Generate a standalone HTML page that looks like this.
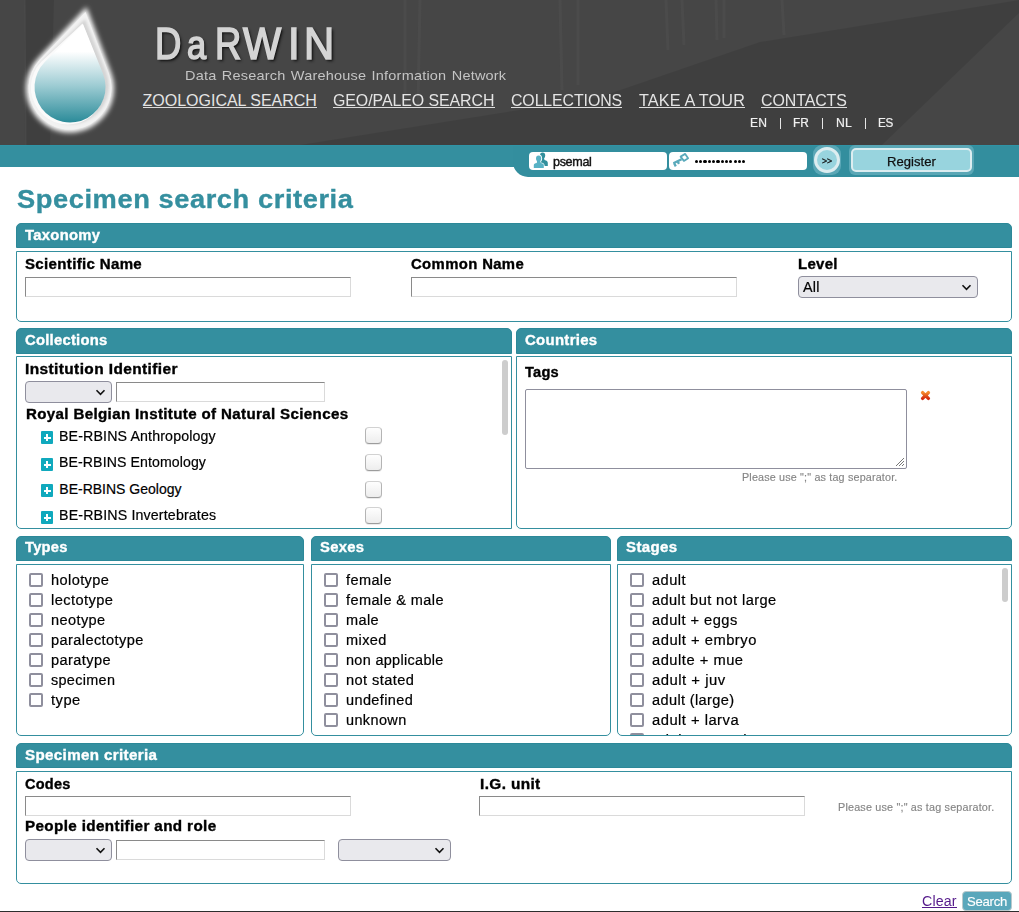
<!DOCTYPE html>
<html><head><meta charset="utf-8"><title>DaRWIN</title><style>
*{box-sizing:border-box;margin:0;padding:0}
html,body{width:1019px;height:912px;overflow:hidden;background:#fff}
body{position:relative;font-family:"Liberation Sans",sans-serif}
.t{position:absolute;white-space:nowrap}
.ab{position:absolute}
.hd{position:absolute;background:#348f9f;border:1px solid #2c8898;border-radius:5px 5px 0 0;height:25px}
.bd{position:absolute;border:1px solid #348f9f;background:#fff}
.inp{position:absolute;background:#fff;border-style:solid;border-width:1px;border-color:#8a8a8a #dadada #dadada #8a8a8a}
.sel{position:absolute;background:#e9e9ed;border:1px solid #8f8f9d;border-radius:4px}
.cb{position:absolute;width:14px;height:14px;border:2px solid #8f8f9d;border-radius:2px;background:#fff}
.ccb{position:absolute;width:17px;height:17px;border:1px solid;border-color:#d2d2d2 #b4b4b4 #9c9c9c #b4b4b4;border-radius:4px;background:linear-gradient(#fefefe,#ededed);box-shadow:0 1px 0 rgba(0,0,0,.08)}
.pl{position:absolute;width:12px;height:13px;background:#10a9bd;border-radius:1px}
.pl:before{content:"";position:absolute;left:5.2px;top:3.3px;width:1.8px;height:7px;background:#fff}
.pl:after{content:"";position:absolute;left:2.5px;top:6.2px;width:7.3px;height:1.8px;background:#fff}
.sb{position:absolute;width:6px;background:#cdcdcd;border-radius:3px}
</style></head><body>
<div class="ab" style="position:absolute;left:0px;top:0px;width:1019px;height:145px;background:#464646;overflow:hidden;"></div>
<svg class="ab" style="left:0;top:0" width="1019" height="145" viewBox="0 0 1019 145"><defs><filter id="bl" x="-20%" y="-20%" width="140%" height="140%"><feGaussianBlur stdDeviation="2.8"/></filter><filter id="bl2" x="-20%" y="-20%" width="140%" height="140%"><feGaussianBlur stdDeviation="1.5"/></filter><linearGradient id="dg" x1="0" y1="0" x2="0" y2="1"><stop offset="0" stop-color="#fff"/><stop offset="0.28" stop-color="#fff"/><stop offset="0.62" stop-color="#9fcdd4"/><stop offset="1" stop-color="#2b8b99"/></linearGradient></defs><path d="M300 145 L600 97 L760 42 L1019 0 L1019 13 L882 145 Z" fill="#000" opacity="0.09"/><path d="M24 0 L54 0 L50 145 L25 145 Z" fill="#000" opacity="0.09"/><path d="M24 0 L25.5 0 L26.5 145 L25 145 Z" fill="#fff" opacity="0.05"/><g fill="none" stroke="#555" stroke-width="3" opacity="0.35"><path d="M405 0 L405 110 M420 0 L418 105 M560 0 L562 90 M578 0 L578 85 M666 0 L668 50 M682 0 L684 45 M716 0 L717 40 M724 0 L724 38 M782 0 L784 35"/></g><path d="M86.5 7.0 L111.2 73.1 A44 44 0 1 1 38.0 58.3 Z" fill="#ffffff" filter="url(#bl)"/><path d="M85.5 12.0 L108.8 73.2 A41.5 41.5 0 1 1 40.1 59.2 Z" fill="#f2f2f2"/><path d="M84.0 20.0 L105.3 72.8 A38 38 0 1 1 43.4 59.9 Z" fill="#d4d4d4" filter="url(#bl2)" transform="translate(1,-1)"/><path d="M84.0 22.0 L104.0 73.0 A37 37 0 1 1 43.0 60.0 Z" fill="#fafafa" transform="translate(-1.5,1.5)"/><path d="M83.0 24.0 L103.0 73.8 A35.5 35.5 0 1 1 45.0 61.8 Z" fill="url(#dg)"/></svg>
<div class="t" style="left:154.84px;top:21.53px;font-size:44.5px;line-height:44.5px;color:#d4d4d4;transform:scaleX(0.8200);transform-origin:0 0;-webkit-text-stroke:1.6px #d4d4d4;text-shadow:2px 2px 3px #101010,1px 1px 1px #1a1a1a;">D</div>
<div class="t" style="left:186.91px;top:25.34px;font-size:40px;line-height:40px;color:#d4d4d4;transform:scaleX(0.8600);transform-origin:0 0;-webkit-text-stroke:1.6px #d4d4d4;text-shadow:2px 2px 3px #101010,1px 1px 1px #1a1a1a;">a</div>
<div class="t" style="left:214.84px;top:21.53px;font-size:44.5px;line-height:44.5px;color:#d4d4d4;transform:scaleX(0.8200);transform-origin:0 0;-webkit-text-stroke:1.6px #d4d4d4;text-shadow:2px 2px 3px #101010,1px 1px 1px #1a1a1a;">R</div>
<div class="t" style="left:243.22px;top:21.53px;font-size:44.5px;line-height:44.5px;color:#d4d4d4;transform:scaleX(0.9100);transform-origin:0 0;-webkit-text-stroke:1.6px #d4d4d4;text-shadow:2px 2px 3px #101010,1px 1px 1px #1a1a1a;">W</div>
<div class="t" style="left:288.36px;top:21.53px;font-size:44.5px;line-height:44.5px;color:#d4d4d4;transform:scaleX(0.9500);transform-origin:0 0;-webkit-text-stroke:1.6px #d4d4d4;text-shadow:2px 2px 3px #101010,1px 1px 1px #1a1a1a;">I</div>
<div class="t" style="left:303.71px;top:21.53px;font-size:44.5px;line-height:44.5px;color:#d4d4d4;transform:scaleX(0.9400);transform-origin:0 0;-webkit-text-stroke:1.6px #d4d4d4;text-shadow:2px 2px 3px #101010,1px 1px 1px #1a1a1a;">N</div>
<div class="t" style="left:185.00px;top:68.57px;font-size:13.5px;line-height:13.5px;color:#c4c4c4;letter-spacing:0.196px;transform:scaleX(1.0736);transform-origin:0 0;word-spacing:1px;">Data Research Warehouse Information Network</div>
<div class="t" style="left:142.60px;top:93.16px;font-size:16px;line-height:16px;color:#e4e4e4;letter-spacing:-0.016px;">ZOOLOGICAL SEARCH</div>
<div class="ab" style="position:absolute;left:143px;top:107px;width:174px;height:1px;background:#dcdcdc;"></div>
<div class="t" style="left:333.30px;top:93.16px;font-size:16px;line-height:16px;color:#e4e4e4;letter-spacing:-0.072px;transform:scaleX(0.9953);transform-origin:0 0;">GEO/PALEO SEARCH</div>
<div class="ab" style="position:absolute;left:333px;top:107px;width:162px;height:1px;background:#dcdcdc;"></div>
<div class="t" style="left:511.40px;top:93.16px;font-size:16px;line-height:16px;color:#e4e4e4;letter-spacing:-0.105px;transform:scaleX(0.9932);transform-origin:0 0;">COLLECTIONS</div>
<div class="ab" style="position:absolute;left:511px;top:107px;width:111px;height:1px;background:#dcdcdc;"></div>
<div class="t" style="left:639.00px;top:93.16px;font-size:16px;line-height:16px;color:#e4e4e4;letter-spacing:0.154px;transform:scaleX(1.0111);transform-origin:0 0;">TAKE A TOUR</div>
<div class="ab" style="position:absolute;left:639px;top:107px;width:106px;height:1px;background:#dcdcdc;"></div>
<div class="t" style="left:761.20px;top:93.16px;font-size:16px;line-height:16px;color:#e4e4e4;letter-spacing:-0.076px;transform:scaleX(0.9953);transform-origin:0 0;">CONTACTS</div>
<div class="ab" style="position:absolute;left:761px;top:107px;width:86px;height:1px;background:#dcdcdc;"></div>
<div class="t" style="left:749.70px;top:116.64px;font-size:12px;line-height:12px;color:#f0f0f0;letter-spacing:0.098px;transform:scaleX(1.0079);transform-origin:0 0;-webkit-text-stroke:0.2px #f0f0f0;">EN</div>
<div class="t" style="left:793.40px;top:116.64px;font-size:12px;line-height:12px;color:#f0f0f0;letter-spacing:-0.120px;transform:scaleX(0.9901);transform-origin:0 0;-webkit-text-stroke:0.2px #f0f0f0;">FR</div>
<div class="t" style="left:835.80px;top:116.64px;font-size:12px;line-height:12px;color:#f0f0f0;letter-spacing:0.195px;transform:scaleX(1.0172);transform-origin:0 0;-webkit-text-stroke:0.2px #f0f0f0;">NL</div>
<div class="t" style="left:878.00px;top:116.64px;font-size:12px;line-height:12px;color:#f0f0f0;letter-spacing:-0.310px;transform:scaleX(0.9748);transform-origin:0 0;-webkit-text-stroke:0.2px #f0f0f0;">ES</div>
<div class="ab" style="left:779.6px;top:117.5px;width:1.3px;height:11.8px;background:#e6e6e6"></div>
<div class="ab" style="left:822px;top:117.5px;width:1.3px;height:11.8px;background:#e6e6e6"></div>
<div class="ab" style="left:864.8px;top:117.5px;width:1.3px;height:11.8px;background:#e6e6e6"></div>
<div class="ab" style="position:absolute;left:0px;top:145px;width:1019px;height:22px;background:#348f9f;"></div>
<div class="ab" style="position:absolute;left:513px;top:145px;width:506px;height:32px;background:#338e9e;border-bottom-left-radius:15px;"></div>
<div class="ab" style="position:absolute;left:0px;top:145px;width:1019px;height:1px;background:#2f94a6;"></div>
<div class="ab" style="position:absolute;left:529px;top:152px;width:138px;height:18px;background:#fff;border-radius:4px;"></div>
<div class="ab" style="position:absolute;left:669px;top:152px;width:138px;height:18px;background:#fff;border-radius:4px;"></div>
<svg class="ab" style="left:528px;top:150px" width="22" height="20" viewBox="0 0 22 20"><ellipse cx="14.6" cy="5.6" rx="2.6" ry="3.1" fill="#318f9c"/><path d="M13.2 8 L16 8 L16.5 10 Q19.8 10.5 19.8 13 L19.8 16 L12 16 L12 10 Z" fill="#318f9c"/><g fill="#fff"><ellipse cx="10.6" cy="8.4" rx="3.5" ry="3.9"/><path d="M5 18.5 L5 15.3 Q5 12.2 10.6 12.2 Q16.5 12.2 16.5 15.3 L16.5 18.5 Z"/></g><g fill="#57b2c5"><ellipse cx="10.6" cy="8.6" rx="2.6" ry="3.1"/><path d="M9 11 L12.2 11 L12.5 13 Q15.8 13.2 15.8 15.3 L15.8 18 L5.8 18 L5.8 15.3 Q5.8 13.2 8.8 13 Z"/></g></svg>
<div class="t" style="left:553.30px;top:154.80px;font-size:13px;line-height:13px;color:#111;letter-spacing:-0.352px;transform:scaleX(0.9675);transform-origin:0 0;-webkit-text-stroke:0.4px #111;">psemal</div>
<svg class="ab" style="left:668px;top:150px" width="24" height="20" viewBox="0 0 24 20"><g fill="none" stroke="#5aaabb" stroke-width="1.8" stroke-linejoin="round"><path d="M12.6 6.6 L17.2 3.9 L20.1 8.3 L15.9 10.9 Z"/><path d="M13.6 9.2 L5.4 13.3 M6 13 L7.8 16.4 M9.6 11.4 L11 13.9" stroke-width="2.3"/></g></svg>
<div class="ab" style="left:694.80px;top:159.5px;width:3.3px;height:3.3px;border-radius:50%;background:#000"></div><div class="ab" style="left:699.10px;top:159.5px;width:3.3px;height:3.3px;border-radius:50%;background:#000"></div><div class="ab" style="left:703.40px;top:159.5px;width:3.3px;height:3.3px;border-radius:50%;background:#000"></div><div class="ab" style="left:707.70px;top:159.5px;width:3.3px;height:3.3px;border-radius:50%;background:#000"></div><div class="ab" style="left:712.00px;top:159.5px;width:3.3px;height:3.3px;border-radius:50%;background:#000"></div><div class="ab" style="left:716.30px;top:159.5px;width:3.3px;height:3.3px;border-radius:50%;background:#000"></div><div class="ab" style="left:720.60px;top:159.5px;width:3.3px;height:3.3px;border-radius:50%;background:#000"></div><div class="ab" style="left:724.90px;top:159.5px;width:3.3px;height:3.3px;border-radius:50%;background:#000"></div><div class="ab" style="left:729.20px;top:159.5px;width:3.3px;height:3.3px;border-radius:50%;background:#000"></div><div class="ab" style="left:733.50px;top:159.5px;width:3.3px;height:3.3px;border-radius:50%;background:#000"></div><div class="ab" style="left:737.80px;top:159.5px;width:3.3px;height:3.3px;border-radius:50%;background:#000"></div><div class="ab" style="left:742.10px;top:159.5px;width:3.3px;height:3.3px;border-radius:50%;background:#000"></div>
<div class="ab" style="position:absolute;left:813px;top:145px;width:28px;height:30px;background:#5aa7b6;border-radius:9px;"></div>
<div class="ab" style="position:absolute;left:814px;top:147px;width:26px;height:26px;background:#98d4de;border:3px solid #dcedf0;border-radius:50%;"></div>
<div class="t" style="left:822.00px;top:157.38px;font-size:9px;line-height:9px;color:#111;letter-spacing:-0.157px;transform:scaleX(0.9805);transform-origin:0 0;-webkit-text-stroke:0.3px #111;">&gt;&gt;</div>
<div class="ab" style="position:absolute;left:849px;top:145px;width:125px;height:30px;background:#5aa7b6;border-radius:6px;"></div>
<div class="ab" style="position:absolute;left:851px;top:148px;width:121px;height:24px;background:#98d4de;border:2px solid #dcedf0;border-radius:5px;"></div>
<div class="t" style="left:886.80px;top:155.20px;font-size:13px;line-height:13px;color:#111;letter-spacing:0.044px;transform:scaleX(1.0049);transform-origin:0 0;-webkit-text-stroke:0.25px #111;">Register</div>
<div class="t" style="left:17.00px;top:186.71px;font-size:25.5px;line-height:25.5px;font-weight:bold;-webkit-text-stroke:0.35px #358f9f;color:#358f9f;letter-spacing:0.539px;transform:scaleX(1.0687);transform-origin:0 0;">Specimen search criteria</div>
<div class="hd" style="left:16px;top:223px;width:996px;height:25px"></div>
<div class="t" style="left:24.60px;top:228.15px;font-size:14px;line-height:14px;font-weight:bold;-webkit-text-stroke:0.35px #fff;color:#fff;letter-spacing:0.302px;transform:scaleX(1.0555);transform-origin:0 0;">Taxonomy</div>
<div class="bd" style="left:16px;top:251px;width:996px;height:71px;border-radius:0 0 5px 5px;"></div>
<div class="t" style="left:25.00px;top:257.15px;font-size:14px;line-height:14px;font-weight:bold;-webkit-text-stroke:0.35px #000;color:#000;letter-spacing:0.318px;transform:scaleX(1.0736);transform-origin:0 0;">Scientific Name</div>
<div class="inp" style="left:25px;top:277px;width:326px;height:20px"></div>
<div class="t" style="left:411.00px;top:257.15px;font-size:14px;line-height:14px;font-weight:bold;-webkit-text-stroke:0.35px #000;color:#000;letter-spacing:0.357px;transform:scaleX(1.0608);transform-origin:0 0;">Common Name</div>
<div class="inp" style="left:411px;top:277px;width:326px;height:20px"></div>
<div class="t" style="left:798.00px;top:257.15px;font-size:14px;line-height:14px;font-weight:bold;-webkit-text-stroke:0.35px #000;color:#000;letter-spacing:0.303px;transform:scaleX(1.0677);transform-origin:0 0;">Level</div>
<div class="sel" style="left:798px;top:276px;width:180px;height:22px"><svg class="ab" style="right:5px;top:6.5px" width="11" height="7" viewBox="0 0 11 7"><path d="M1.5 1.3 L5.5 5.3 L9.5 1.3" fill="none" stroke="#111" stroke-width="1.6"/></svg></div>
<div class="t" style="left:803.00px;top:280.15px;font-size:14px;line-height:14px;color:#000;letter-spacing:0.188px;transform:scaleX(1.0248);transform-origin:0 0;-webkit-text-stroke:0.2px #000;">All</div>
<div class="hd" style="left:16px;top:328px;width:496px;height:26px"></div>
<div class="t" style="left:24.60px;top:332.85px;font-size:14px;line-height:14px;font-weight:bold;-webkit-text-stroke:0.35px #fff;color:#fff;letter-spacing:0.244px;transform:scaleX(1.0564);transform-origin:0 0;">Collections</div>
<div class="bd" style="left:16px;top:356px;width:496px;height:173px;border-radius:0 0 0 5px;"></div>
<div class="t" style="left:25.00px;top:362.15px;font-size:14px;line-height:14px;font-weight:bold;-webkit-text-stroke:0.35px #000;color:#000;letter-spacing:0.367px;transform:scaleX(1.1021);transform-origin:0 0;">Institution Identifier</div>
<div class="sel" style="left:25px;top:381px;width:87px;height:22px"><svg class="ab" style="right:5px;top:6.5px" width="11" height="7" viewBox="0 0 11 7"><path d="M1.5 1.3 L5.5 5.3 L9.5 1.3" fill="none" stroke="#111" stroke-width="1.6"/></svg></div>
<div class="inp" style="left:116px;top:382px;width:209px;height:20px"></div>
<div class="t" style="left:25.50px;top:407.15px;font-size:14px;line-height:14px;font-weight:bold;-webkit-text-stroke:0.35px #000;color:#000;letter-spacing:0.325px;transform:scaleX(1.0795);transform-origin:0 0;">Royal Belgian Institute of Natural Sciences</div>
<div class="pl" style="left:41px;top:431px"></div>
<div class="t" style="left:59.30px;top:429.35px;font-size:14px;line-height:14px;color:#000;letter-spacing:0.143px;transform:scaleX(1.0133);transform-origin:0 0;-webkit-text-stroke:0.2px #000;">BE-RBINS Anthropology</div>
<div class="ccb" style="left:365px;top:427px"></div>
<div class="pl" style="left:41px;top:458px"></div>
<div class="t" style="left:59.30px;top:455.15px;font-size:14px;line-height:14px;color:#000;letter-spacing:0.096px;transform:scaleX(1.0085);transform-origin:0 0;-webkit-text-stroke:0.2px #000;">BE-RBINS Entomology</div>
<div class="ccb" style="left:365px;top:454px"></div>
<div class="pl" style="left:41px;top:484px"></div>
<div class="t" style="left:59.30px;top:481.65px;font-size:14px;line-height:14px;color:#000;-webkit-text-stroke:0.2px #000;">BE-RBINS Geology</div>
<div class="ccb" style="left:365px;top:481px"></div>
<div class="pl" style="left:41px;top:511px"></div>
<div class="t" style="left:59.30px;top:508.15px;font-size:14px;line-height:14px;color:#000;letter-spacing:0.149px;transform:scaleX(1.0146);transform-origin:0 0;-webkit-text-stroke:0.2px #000;">BE-RBINS Invertebrates</div>
<div class="ccb" style="left:365px;top:507px"></div>
<div class="sb" style="left:502px;top:360px;height:75px"></div>
<div class="hd" style="left:516px;top:328px;width:496px;height:26px"></div>
<div class="t" style="left:524.60px;top:332.85px;font-size:14px;line-height:14px;font-weight:bold;-webkit-text-stroke:0.35px #fff;color:#fff;letter-spacing:0.295px;transform:scaleX(1.0650);transform-origin:0 0;">Countries</div>
<div class="bd" style="left:516px;top:356px;width:496px;height:173px;border-radius:0 0 5px 5px;"></div>
<div class="t" style="left:525.00px;top:365.15px;font-size:14px;line-height:14px;font-weight:bold;-webkit-text-stroke:0.35px #000;color:#000;letter-spacing:0.212px;transform:scaleX(1.0420);transform-origin:0 0;">Tags</div>
<div class="ab" style="left:525px;top:389px;width:382px;height:80px;border:1px solid #8f8f9d;border-radius:2px;background:#fff"></div>
<svg class="ab" style="left:894px;top:456px" width="11" height="11" viewBox="0 0 11 11"><path d="M10 2 L2 10 M10 5 L5 10 M10 8 L8 10" stroke="#777" stroke-width="1"/></svg>
<svg class="ab" style="left:919px;top:389px" width="13" height="13" viewBox="0 0 13 13"><defs><linearGradient id="xg" x1="0" y1="0" x2="0" y2="1"><stop offset="0" stop-color="#f58a2e"/><stop offset="1" stop-color="#d42c0e"/></linearGradient></defs><path d="M3.6 3.6 L9.4 9.4 M9.4 3.6 L3.6 9.4" stroke="url(#xg)" stroke-width="3.4" stroke-linecap="round"/></svg>
<div class="t" style="left:741.50px;top:472.41px;font-size:10.5px;line-height:10.5px;color:#858585;letter-spacing:0.167px;transform:scaleX(1.0250);transform-origin:0 0;-webkit-text-stroke:0.15px #858585;">Please use ";" as tag separator.</div>
<div class="hd" style="left:16px;top:536px;width:288px;height:25px"></div>
<div class="t" style="left:24.60px;top:540.05px;font-size:14px;line-height:14px;font-weight:bold;-webkit-text-stroke:0.35px #fff;color:#fff;letter-spacing:0.251px;transform:scaleX(1.0502);transform-origin:0 0;">Types</div>
<div class="hd" style="left:311px;top:536px;width:300px;height:25px"></div>
<div class="t" style="left:319.60px;top:540.05px;font-size:14px;line-height:14px;font-weight:bold;-webkit-text-stroke:0.35px #fff;color:#fff;letter-spacing:0.283px;transform:scaleX(1.0554);transform-origin:0 0;">Sexes</div>
<div class="hd" style="left:617px;top:536px;width:395px;height:25px"></div>
<div class="t" style="left:625.60px;top:540.05px;font-size:14px;line-height:14px;font-weight:bold;-webkit-text-stroke:0.35px #fff;color:#fff;letter-spacing:0.346px;transform:scaleX(1.0729);transform-origin:0 0;">Stages</div>
<div class="bd" style="left:16px;top:564px;width:288px;height:172px;border-radius:0 0 5px 5px;"></div>
<div class="bd" style="left:311px;top:564px;width:300px;height:172px;border-radius:0 0 5px 5px;"></div>
<div class="bd" style="left:617px;top:564px;width:395px;height:172px;border-radius:0 0 5px 5px;"></div>
<div class="cb" style="left:29px;top:573px"></div>
<div class="t" style="left:51.00px;top:573.15px;font-size:14px;line-height:14px;color:#000;letter-spacing:0.383px;transform:scaleX(1.0402);transform-origin:0 0;-webkit-text-stroke:0.2px #000;">holotype</div>
<div class="cb" style="left:29px;top:593px"></div>
<div class="t" style="left:51.00px;top:593.15px;font-size:14px;line-height:14px;color:#000;letter-spacing:0.406px;transform:scaleX(1.0454);transform-origin:0 0;-webkit-text-stroke:0.2px #000;">lectotype</div>
<div class="cb" style="left:29px;top:613px"></div>
<div class="t" style="left:51.00px;top:613.15px;font-size:14px;line-height:14px;color:#000;letter-spacing:0.394px;transform:scaleX(1.0383);transform-origin:0 0;-webkit-text-stroke:0.2px #000;">neotype</div>
<div class="cb" style="left:29px;top:633px"></div>
<div class="t" style="left:51.00px;top:633.15px;font-size:14px;line-height:14px;color:#000;letter-spacing:0.383px;transform:scaleX(1.0411);transform-origin:0 0;-webkit-text-stroke:0.2px #000;">paralectotype</div>
<div class="cb" style="left:29px;top:653px"></div>
<div class="t" style="left:51.00px;top:653.15px;font-size:14px;line-height:14px;color:#000;letter-spacing:0.402px;transform:scaleX(1.0410);transform-origin:0 0;-webkit-text-stroke:0.2px #000;">paratype</div>
<div class="cb" style="left:29px;top:673px"></div>
<div class="t" style="left:51.00px;top:673.15px;font-size:14px;line-height:14px;color:#000;letter-spacing:0.318px;transform:scaleX(1.0291);transform-origin:0 0;-webkit-text-stroke:0.2px #000;">specimen</div>
<div class="cb" style="left:29px;top:693px"></div>
<div class="t" style="left:51.00px;top:693.15px;font-size:14px;line-height:14px;color:#000;letter-spacing:0.474px;transform:scaleX(1.0502);transform-origin:0 0;-webkit-text-stroke:0.2px #000;">type</div>
<div class="cb" style="left:324px;top:573px"></div>
<div class="t" style="left:345.50px;top:573.15px;font-size:14px;line-height:14px;color:#000;letter-spacing:0.379px;transform:scaleX(1.0375);transform-origin:0 0;-webkit-text-stroke:0.2px #000;">female</div>
<div class="cb" style="left:324px;top:593px"></div>
<div class="t" style="left:345.50px;top:593.15px;font-size:14px;line-height:14px;color:#000;letter-spacing:0.374px;transform:scaleX(1.0376);transform-origin:0 0;-webkit-text-stroke:0.2px #000;">female &amp; male</div>
<div class="cb" style="left:324px;top:613px"></div>
<div class="t" style="left:345.50px;top:613.15px;font-size:14px;line-height:14px;color:#000;letter-spacing:0.393px;transform:scaleX(1.0358);transform-origin:0 0;-webkit-text-stroke:0.2px #000;">male</div>
<div class="cb" style="left:324px;top:633px"></div>
<div class="t" style="left:345.50px;top:633.15px;font-size:14px;line-height:14px;color:#000;letter-spacing:0.404px;transform:scaleX(1.0374);transform-origin:0 0;-webkit-text-stroke:0.2px #000;">mixed</div>
<div class="cb" style="left:324px;top:653px"></div>
<div class="t" style="left:345.50px;top:653.15px;font-size:14px;line-height:14px;color:#000;letter-spacing:0.306px;transform:scaleX(1.0326);transform-origin:0 0;-webkit-text-stroke:0.2px #000;">non applicable</div>
<div class="cb" style="left:324px;top:673px"></div>
<div class="t" style="left:345.50px;top:673.15px;font-size:14px;line-height:14px;color:#000;letter-spacing:0.391px;transform:scaleX(1.0443);transform-origin:0 0;-webkit-text-stroke:0.2px #000;">not stated</div>
<div class="cb" style="left:324px;top:693px"></div>
<div class="t" style="left:345.50px;top:693.15px;font-size:14px;line-height:14px;color:#000;letter-spacing:0.358px;transform:scaleX(1.0362);transform-origin:0 0;-webkit-text-stroke:0.2px #000;">undefined</div>
<div class="cb" style="left:324px;top:713px"></div>
<div class="t" style="left:345.50px;top:713.15px;font-size:14px;line-height:14px;color:#000;letter-spacing:0.376px;transform:scaleX(1.0323);transform-origin:0 0;-webkit-text-stroke:0.2px #000;">unknown</div>
<div class="cb" style="left:630px;top:573px"></div>
<div class="t" style="left:651.50px;top:573.15px;font-size:14px;line-height:14px;color:#000;letter-spacing:0.418px;transform:scaleX(1.0481);transform-origin:0 0;-webkit-text-stroke:0.2px #000;">adult</div>
<div class="cb" style="left:630px;top:593px"></div>
<div class="t" style="left:651.50px;top:593.15px;font-size:14px;line-height:14px;color:#000;letter-spacing:0.375px;transform:scaleX(1.0442);transform-origin:0 0;-webkit-text-stroke:0.2px #000;">adult but not large</div>
<div class="cb" style="left:630px;top:613px"></div>
<div class="t" style="left:651.50px;top:613.15px;font-size:14px;line-height:14px;color:#000;letter-spacing:0.432px;transform:scaleX(1.0472);transform-origin:0 0;-webkit-text-stroke:0.2px #000;">adult + eggs</div>
<div class="cb" style="left:630px;top:633px"></div>
<div class="t" style="left:651.50px;top:633.15px;font-size:14px;line-height:14px;color:#000;letter-spacing:0.483px;transform:scaleX(1.0509);transform-origin:0 0;-webkit-text-stroke:0.2px #000;">adult + embryo</div>
<div class="cb" style="left:630px;top:653px"></div>
<div class="t" style="left:651.50px;top:653.15px;font-size:14px;line-height:14px;color:#000;letter-spacing:0.484px;transform:scaleX(1.0500);transform-origin:0 0;-webkit-text-stroke:0.2px #000;">adulte + mue</div>
<div class="cb" style="left:630px;top:673px"></div>
<div class="t" style="left:651.50px;top:673.15px;font-size:14px;line-height:14px;color:#000;letter-spacing:0.488px;transform:scaleX(1.0591);transform-origin:0 0;-webkit-text-stroke:0.2px #000;">adult + juv</div>
<div class="cb" style="left:630px;top:693px"></div>
<div class="t" style="left:651.50px;top:693.15px;font-size:14px;line-height:14px;color:#000;letter-spacing:0.343px;transform:scaleX(1.0414);transform-origin:0 0;-webkit-text-stroke:0.2px #000;">adult (large)</div>
<div class="cb" style="left:630px;top:713px"></div>
<div class="t" style="left:651.50px;top:713.15px;font-size:14px;line-height:14px;color:#000;letter-spacing:0.456px;transform:scaleX(1.0543);transform-origin:0 0;-webkit-text-stroke:0.2px #000;">adult + larva</div>
<div class="ab" style="left:618px;top:733px;width:380px;height:2px;overflow:hidden"><div class="cb" style="left:12px;top:0"></div><div class="t" style="left:33.50px;top:0.15px;font-size:14px;line-height:14px;color:#000;letter-spacing:0.507px;transform:scaleX(1.0523);transform-origin:0 0;-webkit-text-stroke:0.2px #000;">adult + nymph</div>
</div>
<div class="sb" style="left:1002px;top:568px;height:34px"></div>
<div class="hd" style="left:16px;top:743px;width:996px;height:25px"></div>
<div class="t" style="left:24.60px;top:747.85px;font-size:14px;line-height:14px;font-weight:bold;-webkit-text-stroke:0.35px #fff;color:#fff;letter-spacing:0.340px;transform:scaleX(1.0802);transform-origin:0 0;">Specimen criteria</div>
<div class="bd" style="left:16px;top:771px;width:996px;height:113px;border-radius:0 0 5px 5px;"></div>
<div class="t" style="left:25.00px;top:777.15px;font-size:14px;line-height:14px;font-weight:bold;-webkit-text-stroke:0.35px #000;color:#000;letter-spacing:0.206px;transform:scaleX(1.0375);transform-origin:0 0;">Codes</div>
<div class="inp" style="left:25px;top:796px;width:326px;height:20px"></div>
<div class="t" style="left:479.50px;top:777.15px;font-size:14px;line-height:14px;font-weight:bold;-webkit-text-stroke:0.35px #000;color:#000;letter-spacing:0.344px;transform:scaleX(1.0977);transform-origin:0 0;">I.G. unit</div>
<div class="inp" style="left:479px;top:796px;width:326px;height:20px"></div>
<div class="t" style="left:838.20px;top:802.31px;font-size:10.5px;line-height:10.5px;color:#858585;letter-spacing:0.183px;transform:scaleX(1.0274);transform-origin:0 0;-webkit-text-stroke:0.15px #858585;">Please use ";" as tag separator.</div>
<div class="t" style="left:25.00px;top:819.15px;font-size:14px;line-height:14px;font-weight:bold;-webkit-text-stroke:0.35px #000;color:#000;letter-spacing:0.343px;transform:scaleX(1.0870);transform-origin:0 0;">People identifier and role</div>
<div class="sel" style="left:25px;top:839px;width:87px;height:22px"><svg class="ab" style="right:5px;top:6.5px" width="11" height="7" viewBox="0 0 11 7"><path d="M1.5 1.3 L5.5 5.3 L9.5 1.3" fill="none" stroke="#111" stroke-width="1.6"/></svg></div>
<div class="inp" style="left:116px;top:840px;width:209px;height:20px"></div>
<div class="sel" style="left:338px;top:839px;width:113px;height:22px"><svg class="ab" style="right:5px;top:6.5px" width="11" height="7" viewBox="0 0 11 7"><path d="M1.5 1.3 L5.5 5.3 L9.5 1.3" fill="none" stroke="#111" stroke-width="1.6"/></svg></div>
<div class="t" style="left:922.30px;top:893.65px;font-size:14px;line-height:14px;color:#551a8b;letter-spacing:0.147px;transform:scaleX(1.0149);transform-origin:0 0;">Clear</div>
<div class="ab" style="position:absolute;left:922px;top:907px;width:35px;height:1px;background:#551a8b;"></div>
<div class="ab" style="position:absolute;left:962px;top:891px;width:50px;height:20px;background:#5aa7bb;border:1px solid #b9c9cc;border-radius:4px;"></div>
<div class="t" style="left:967.00px;top:894.87px;font-size:13.5px;line-height:13.5px;color:#fff;letter-spacing:-0.285px;transform:scaleX(0.9741);transform-origin:0 0;-webkit-text-stroke:0.15px #fff;">Search</div>
<div class="ab" style="position:absolute;left:0px;top:911px;width:1019px;height:1px;background:#2d2d2d;"></div>
</body></html>
